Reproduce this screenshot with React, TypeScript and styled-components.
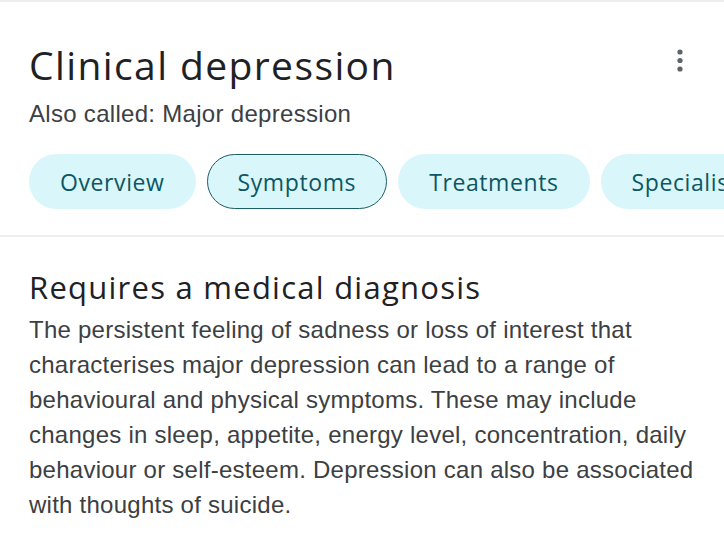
import React from "react";
import styled, { createGlobalStyle } from "styled-components";

const Global = createGlobalStyle`
  html, body { margin: 0; padding: 0; background: #fff; }
  body { width: 724px; height: 546px; overflow: hidden; }
`;

const Page = styled.div`
  width: 724px;
  height: 546px;
  background: #fff;
  border-top: 2px solid #eeeeee;
  box-sizing: border-box;
  overflow: hidden;
`;

const Header = styled.header`
  padding: 38px 0 0 29px;
  display: flex;
  flex-direction: column;
`;

const TitleRow = styled.div`
  display: flex;
  align-items: flex-start;
  justify-content: space-between;
  padding-right: 41px;
`;

const Title = styled.h1`
  margin: 0;
  font-family: "Open Sans", sans-serif;
  font-weight: 400;
  font-size: 39px;
  line-height: 50px;
  color: #202124;
  letter-spacing: 1.4px;
`;

const MenuButton = styled.button`
  border: none;
  background: transparent;
  padding: 9px 0 0;
  display: flex;
  cursor: pointer;
`;

const Subtitle = styled.div`
  margin-top: 9px;
  font-family: "Liberation Sans", Arial, sans-serif;
  font-size: 24px;
  line-height: 30px;
  letter-spacing: 0.3px;
  color: #3c4043;
`;

const Chips = styled.nav`
  display: flex;
  gap: 11px;
  margin-top: 25px;
  white-space: nowrap;
`;

const Chip = styled.button<{ $active?: boolean }>`
  flex: none;
  height: 55px;
  padding: 0 30px;
  border-radius: 28px;
  background: #d9f6fa;
  border: 1.5px solid ${(p) => (p.$active ? "#1b5e66" : "transparent")};
  color: #0d5663;
  font-family: "Open Sans", sans-serif;
  font-size: 23px;
  font-weight: 500;
  letter-spacing: 0.6px;
  box-sizing: border-box;
`;

const Divider = styled.hr`
  margin: 26px 0 0;
  border: none;
  height: 2px;
  background: #eeeeee;
`;

const Section = styled.section`
  padding: 30px 22px 0 29px;
`;

const Heading = styled.h2`
  margin: 0;
  font-family: "Open Sans", sans-serif;
  font-weight: 400;
  font-size: 31px;
  line-height: 40px;
  color: #202124;
  letter-spacing: 1.25px;
`;

const Body = styled.p`
  margin: 5px 0 0;
  font-family: "Liberation Sans", Arial, sans-serif;
  font-size: 24px;
  line-height: 35px;
  letter-spacing: 0.25px;
  color: #3c4043;
`;

const Kebab = () => (
  <svg width="6" height="24" viewBox="0 0 6 24" fill="#5f6368">
    <circle cx="3" cy="3" r="2.6" />
    <circle cx="3" cy="11.5" r="2.6" />
    <circle cx="3" cy="20" r="2.6" />
  </svg>
);

export default function App() {
  return (
    <>
      <Global />
      <Page>
        <Header>
          <TitleRow>
            <Title>Clinical depression</Title>
            <MenuButton aria-label="More options">
              <Kebab />
            </MenuButton>
          </TitleRow>
          <Subtitle>Also called: Major depression</Subtitle>
          <Chips>
            <Chip>Overview</Chip>
            <Chip $active>Symptoms</Chip>
            <Chip>Treatments</Chip>
            <Chip>Specialists</Chip>
          </Chips>
        </Header>
        <Divider />
        <Section>
          <Heading>Requires a medical diagnosis</Heading>
          <Body>
            The persistent feeling of sadness or loss of interest that characterises major
            depression can lead to a range of behavioural and physical symptoms. These may
            include changes in sleep, appetite, energy level, concentration, daily behaviour
            or self-esteem. Depression can also be associated with thoughts of suicide.
          </Body>
        </Section>
      </Page>
    </>
  );
}
